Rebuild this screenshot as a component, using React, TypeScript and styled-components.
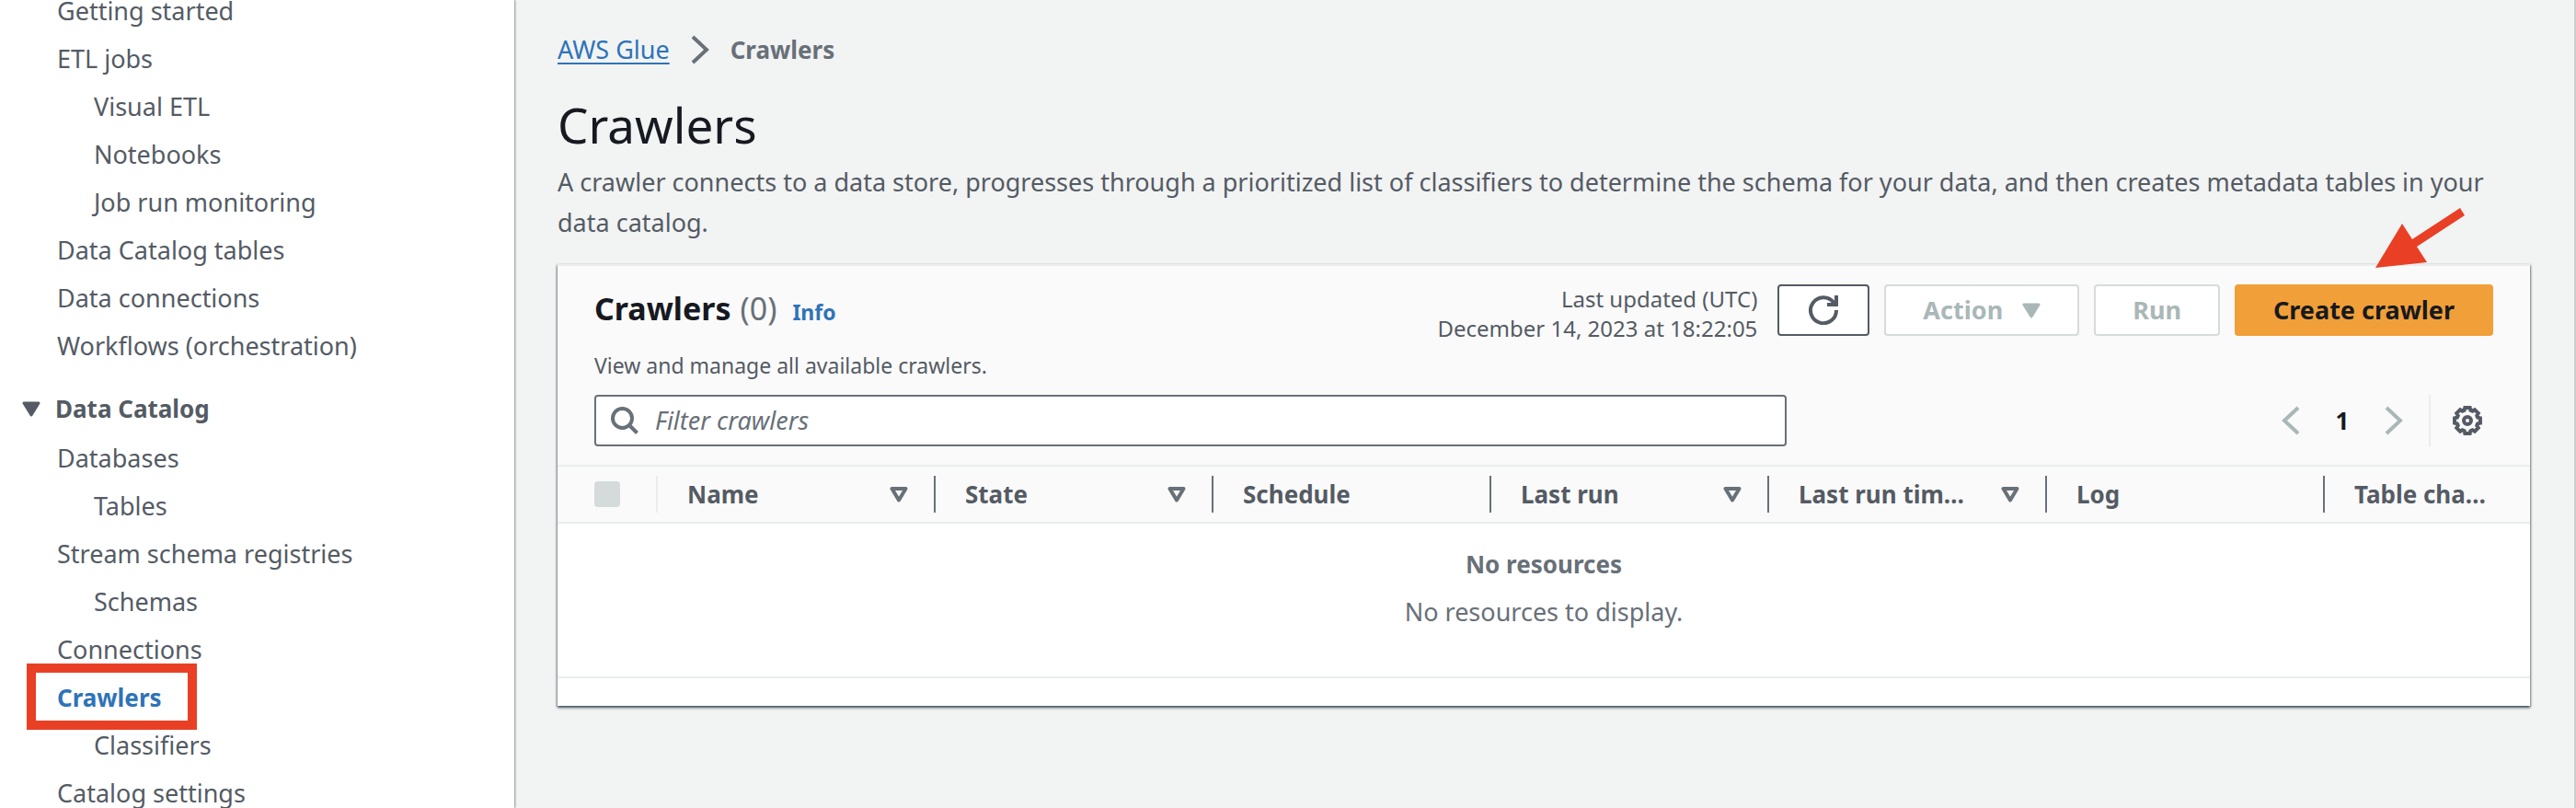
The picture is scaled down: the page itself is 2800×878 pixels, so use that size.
import React from 'react';
import styled, { createGlobalStyle, css } from 'styled-components';

const color = {
  text: '#545b64',
  muted: '#687078',
  dark: '#16191f',
  blue: '#2e73b8',
  disabled: '#aab7b8',
  disabledBorder: '#d5dbdb',
  divider: '#eaeded',
  page: '#f2f3f3',
  header: '#fafafa',
  red: '#e94025',
  orange: '#f19f38',
};

const GlobalStyle = createGlobalStyle`
  * { box-sizing: border-box; }
  body {
    margin: 0;
    background: ${color.page};
    color: ${color.text};
    font-family: 'Noto Sans', 'Open Sans', sans-serif;
    font-size: 27px;
    line-height: 44px;
  }
  button, input { font: inherit; color: inherit; }
`;

const Page = styled.div`
  display: flex;
  min-height: 100vh;
  overflow: hidden;
  border-right: 2px solid #c9cecf;
`;

/* Side navigation */

const Sidebar = styled.nav`
  flex: 0 0 559px;
  padding-left: 24px;
  background: #fff;
  box-shadow: 1px 0 2px rgba(0, 28, 36, 0.45);
  z-index: 1;
`;

const NavList = styled.ul`
  display: flex;
  flex-direction: column;
  gap: 28px;
  margin: 0;
  padding: 0 0 0 38px;
  list-style: none;
  line-height: 24px;
`;

const NavItem = styled.li<{ $nested?: boolean }>`
  display: flex;
  padding-left: ${(p) => (p.$nested ? 40 : 0)}px;
`;

const NavLink = styled.a<{ $current?: boolean }>`
  position: relative;
  color: inherit;
  text-decoration: none;
  ${(p) =>
    p.$current &&
    css`
      color: ${color.blue};
      font-size: 26px;
      font-weight: 700;
    `}
`;

const Highlight = styled.span`
  position: absolute;
  inset: -25px -38px -23px -33px;
  border: 10px solid ${color.red};
`;

const SectionToggle = styled.button`
  display: flex;
  align-items: center;
  gap: 16px;
  margin: 44px 0 30px;
  padding: 0;
  border: 0;
  background: none;
  font-size: 26px;
  font-weight: 700;
  line-height: 24px;
`;

/* Main content */

const Main = styled.main`
  flex: 1;
  min-width: 0;
  padding: 32px 48px 0 47px;
`;

const Breadcrumbs = styled.nav`
  display: flex;
  align-items: center;
  gap: 23px;
  color: ${color.muted};
  a {
    color: ${color.blue};
    text-decoration-thickness: 2px;
    text-underline-offset: 4px;
  }
`;

const CurrentCrumb = styled.span`
  font-size: 26px;
  font-weight: 700;
`;

const Title = styled.h1`
  margin: 24px 0 0;
  color: ${color.dark};
  font-size: 53px;
  font-weight: 400;
  line-height: 72px;
`;

const Intro = styled.p`
  margin: 4px 0 23px;
  padding-right: 40px;
`;

const Card = styled.section`
  border-top: 2px solid ${color.divider};
  background: #fff;
  box-shadow: 0 2px 3px rgba(0, 28, 36, 0.65), 1px 1px 2px rgba(0, 28, 36, 0.25),
    -1px 1px 2px rgba(0, 28, 36, 0.25);
`;

const CardHeader = styled.header`
  padding: 20px 40px;
  background: ${color.header};
`;

const HeadingRow = styled.div`
  display: flex;
  justify-content: space-between;
  align-items: flex-start;
`;

const Heading = styled.div`
  display: flex;
  align-items: baseline;
  color: ${color.muted};
`;

const CardTitle = styled.h2`
  margin: 0;
  color: ${color.dark};
  font-size: 34px;
  line-height: 52px;
`;

const Count = styled.span`
  margin: 0 17px 0 10px;
  font-size: 34px;
`;

const InfoLink = styled.a`
  color: ${color.blue};
  font-size: 23px;
  font-weight: 700;
  text-decoration: none;
`;

const Actions = styled.div`
  display: flex;
  align-items: flex-start;
  gap: 16px;
`;

const Updated = styled.div`
  margin-right: 6px;
  font-size: 24px;
  line-height: 32px;
  text-align: right;
`;

const Button = styled.button<{ $primary?: boolean }>`
  position: relative;
  display: flex;
  align-items: center;
  justify-content: center;
  gap: 21px;
  height: 56px;
  padding: 0 40px;
  border: 2px solid ${color.text};
  border-radius: 4px;
  background: #fff;
  font-weight: 700;
  line-height: 40px;
  white-space: nowrap;
  &:disabled {
    border-color: ${color.disabledBorder};
    color: ${color.disabled};
  }
  ${(p) =>
    p.$primary &&
    css`
      border-color: ${color.orange};
      background: ${color.orange};
      color: ${color.dark};
    `}
`;

const IconButton = styled(Button)`
  width: 100px;
  padding: 0;
`;

const Pointer = styled.svg`
  position: absolute;
  right: 28px;
  bottom: 72px;
`;

const Description = styled.p`
  margin: 4px 0 12px;
  font-size: 23px;
  line-height: 40px;
`;

const Tools = styled.div`
  display: flex;
  justify-content: space-between;
  align-items: center;
`;

const SearchBox = styled.label`
  display: flex;
  align-items: center;
  gap: 18px;
  width: 1296px;
  height: 56px;
  padding: 0 16px;
  border: 2px solid ${color.muted};
  border-radius: 4px;
  background: #fff;
`;

const SearchInput = styled.input`
  flex: 1;
  min-width: 0;
  padding: 0;
  border: 0;
  outline: 0;
  background: none;
  &::placeholder {
    color: ${color.muted};
    font-style: italic;
    opacity: 1;
  }
`;

const Pager = styled.div`
  display: flex;
  align-items: center;
  height: 56px;
`;

const PlainButton = styled.button<{ $strong?: boolean }>`
  display: flex;
  align-items: center;
  justify-content: center;
  width: 56px;
  height: 56px;
  padding: 0;
  border: 0;
  background: none;
  color: ${(p) => (p.$strong ? color.dark : color.text)};
  font-size: 26px;
  font-weight: 700;
  &:disabled {
    color: ${color.disabled};
  }
`;

const Preferences = styled.div`
  margin-left: 10px;
  padding-left: 12px;
  border-left: 2px solid ${color.divider};
`;

const Table = styled.table`
  width: 100%;
  table-layout: fixed;
  border-collapse: collapse;
`;

const HeaderCell = styled.th<{ $width?: number }>`
  width: ${(p) => (p.$width ? `${p.$width}px` : 'auto')};
  height: 62px;
  padding: 10px 0;
  border-top: 2px solid ${color.divider};
  border-bottom: 2px solid ${color.divider};
  background: ${color.header};
  font-size: 26px;
  text-align: left;
`;

const CellContent = styled.div<{ $divider?: string; $inset?: number }>`
  display: flex;
  align-items: center;
  justify-content: space-between;
  height: 40px;
  padding: 0 28px 0 ${(p) => p.$inset ?? 32}px;
  border-right: ${(p) => (p.$divider ? `2px solid ${p.$divider}` : '0')};
  white-space: nowrap;
`;

const Checkbox = styled.input`
  appearance: none;
  flex: none;
  width: 28px;
  height: 28px;
  margin: 0;
  border-radius: 4px;
  background: ${color.disabledBorder};
`;

const EmptyCell = styled.td`
  padding: 22px 0 48px;
  border-bottom: 2px solid ${color.divider};
  color: ${color.muted};
  text-align: center;
`;

const EmptyTitle = styled.strong`
  display: block;
  margin-bottom: 8px;
  font-size: 26px;
`;

const EmptyText = styled.p`
  margin: 0;
`;

const CardFooter = styled.footer`
  height: 30px;
`;

const Caret = () => (
  <svg width="20" height="17" viewBox="0 0 20 17" aria-hidden="true">
    <path d="M2 2h16L10 15z" fill="currentColor" stroke="currentColor" strokeWidth="3" strokeLinejoin="round" />
  </svg>
);

const SortIcon = () => (
  <svg width="20" height="17" viewBox="0 0 20 17" aria-hidden="true">
    <path d="M2.5 2h15L10 14.5z" fill="none" stroke={color.muted} strokeWidth="4" strokeLinejoin="round" />
  </svg>
);

const Chevron = ({ left }: { left?: boolean }) => (
  <svg width="20" height="32" viewBox="0 0 20 32" aria-hidden="true">
    <path d={left ? 'M18 2L3 16l15 14' : 'M2 2l15 14L2 30'} fill="none" stroke="currentColor" strokeWidth="4" />
  </svg>
);

const RefreshIcon = () => (
  <svg width="32" height="32" viewBox="0 0 32 32" fill="none" stroke="currentColor" strokeWidth="4" aria-hidden="true">
    <path d="M30 16A14 14 0 1 1 27 7.5" />
    <path d="M30 0v10H20" />
    <path d="M24 10l6-7v7z" fill="currentColor" stroke="none" />
  </svg>
);

const SearchIcon = () => (
  <svg width="30" height="30" viewBox="0 0 30 30" fill="none" stroke={color.muted} strokeWidth="4" aria-hidden="true">
    <circle cx="12.5" cy="12.5" r="10.5" />
    <path d="M20 20l8.5 8.5" />
  </svg>
);

const gearOutline = Array.from({ length: 8 }, (_, i) =>
  [
    [14.2, -11],
    [14.2, 11],
    [11.6, 17],
    [11.6, 28],
  ].map(([r, deg]) => {
    const a = ((i * 45 + deg) * Math.PI) / 180;
    return `${16 + r * Math.cos(a)},${16 + r * Math.sin(a)}`;
  }),
)
  .flat()
  .join(' ');

const GearIcon = () => (
  <svg width="32" height="32" viewBox="0 0 32 32" fill="none" stroke="currentColor" strokeWidth="4" aria-hidden="true">
    <polygon points={gearOutline} />
    <circle cx="16" cy="16" r="4" />
  </svg>
);

type Item = { label: string; nested?: boolean; current?: boolean };

const topItems: Item[] = [
  { label: 'Getting started' },
  { label: 'ETL jobs' },
  { label: 'Visual ETL', nested: true },
  { label: 'Notebooks', nested: true },
  { label: 'Job run monitoring', nested: true },
  { label: 'Data Catalog tables' },
  { label: 'Data connections' },
  { label: 'Workflows (orchestration)' },
];

const catalogItems: Item[] = [
  { label: 'Databases' },
  { label: 'Tables', nested: true },
  { label: 'Stream schema registries' },
  { label: 'Schemas', nested: true },
  { label: 'Connections' },
  { label: 'Crawlers', current: true },
  { label: 'Classifiers', nested: true },
  { label: 'Catalog settings' },
];

const columns = [
  { label: 'Name', sortable: true },
  { label: 'State', sortable: true },
  { label: 'Schedule' },
  { label: 'Last run', sortable: true },
  { label: 'Last run tim…', sortable: true },
  { label: 'Log' },
  { label: 'Table cha…' },
];

const Navigation = ({ items }: { items: Item[] }) => (
  <NavList>
    {items.map((item) => (
      <NavItem key={item.label} $nested={item.nested}>
        <NavLink href="#" $current={item.current} aria-current={item.current ? 'page' : undefined}>
          {item.label}
          {item.current && <Highlight />}
        </NavLink>
      </NavItem>
    ))}
  </NavList>
);

export default function App() {
  return (
    <>
      <GlobalStyle />
      <Page>
        <Sidebar aria-label="AWS Glue">
          <Navigation items={topItems} />
          <SectionToggle aria-expanded="true">
            <Caret />
            Data Catalog
          </SectionToggle>
          <Navigation items={catalogItems} />
        </Sidebar>
        <Main>
          <Breadcrumbs aria-label="Breadcrumbs">
            <a href="#">AWS Glue</a>
            <Chevron />
            <CurrentCrumb>Crawlers</CurrentCrumb>
          </Breadcrumbs>
          <Title>Crawlers</Title>
          <Intro>
            A crawler connects to a data store, progresses through a prioritized list of classifiers to determine the
            schema for your data, and then creates metadata tables in your data catalog.
          </Intro>
          <Card>
            <CardHeader>
              <HeadingRow>
                <Heading>
                  <CardTitle>Crawlers</CardTitle>
                  <Count>(0)</Count>
                  <InfoLink href="#">Info</InfoLink>
                </Heading>
                <Actions>
                  <Updated>
                    Last updated (UTC)
                    <br />
                    December 14, 2023 at 18:22:05
                  </Updated>
                  <IconButton aria-label="Refresh">
                    <RefreshIcon />
                  </IconButton>
                  <Button disabled>
                    Action
                    <Caret />
                  </Button>
                  <Button disabled>Run</Button>
                  <Button $primary>
                    Create crawler
                    <Pointer width="98" height="66" viewBox="0 0 98 66" aria-hidden="true">
                      <path d="M0 66L29 18l11 17L92 1l5 8L45 43l11 17z" fill={color.red} />
                    </Pointer>
                  </Button>
                </Actions>
              </HeadingRow>
              <Description>View and manage all available crawlers.</Description>
              <Tools>
                <SearchBox>
                  <SearchIcon />
                  <SearchInput type="text" placeholder="Filter crawlers" aria-label="Filter crawlers" />
                </SearchBox>
                <Pager>
                  <PlainButton disabled aria-label="Previous page">
                    <Chevron left />
                  </PlainButton>
                  <PlainButton $strong>1</PlainButton>
                  <PlainButton disabled aria-label="Next page">
                    <Chevron />
                  </PlainButton>
                  <Preferences>
                    <PlainButton aria-label="Preferences">
                      <GearIcon />
                    </PlainButton>
                  </Preferences>
                </Pager>
              </Tools>
            </CardHeader>
            <Table>
              <thead>
                <tr>
                  <HeaderCell $width={109}>
                    <CellContent $inset={40} $divider={color.divider}>
                      <Checkbox type="checkbox" disabled aria-label="Select all crawlers" />
                    </CellContent>
                  </HeaderCell>
                  {columns.map((column, i) => {
                    const last = i === columns.length - 1;
                    return (
                      <HeaderCell key={column.label} $width={last ? undefined : 302}>
                        <CellContent $divider={last ? undefined : color.muted}>
                          {column.label}
                          {column.sortable && <SortIcon />}
                        </CellContent>
                      </HeaderCell>
                    );
                  })}
                </tr>
              </thead>
              <tbody>
                <tr>
                  <EmptyCell colSpan={8}>
                    <EmptyTitle>No resources</EmptyTitle>
                    <EmptyText>No resources to display.</EmptyText>
                  </EmptyCell>
                </tr>
              </tbody>
            </Table>
            <CardFooter />
          </Card>
        </Main>
      </Page>
    </>
  );
}
